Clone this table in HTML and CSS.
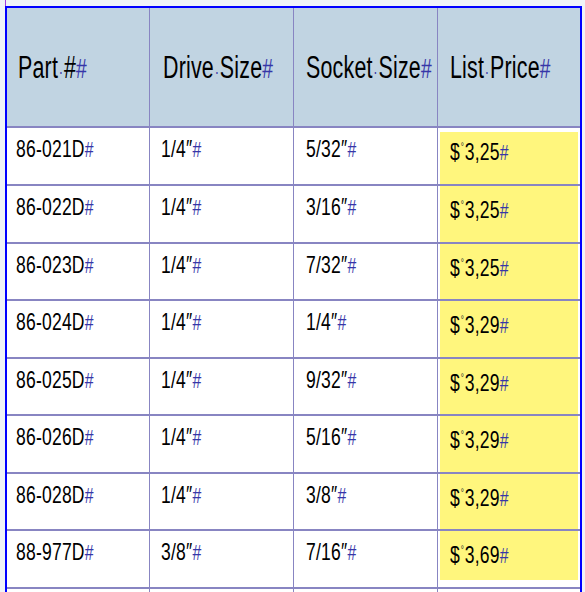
FILE: index.html
```html
<!DOCTYPE html>
<html>
<head>
<meta charset="utf-8">
<link rel="stylesheet" href="styles.css">
</head>
<body>
<div class="stub"></div>
<div class="tbl">
  <div class="th c1"><span class="t">Part<span class="sp">·</span>#<span class="em">#</span></span></div>
  <div class="th c2"><span class="t">Drive<span class="sp">·</span>Size<span class="em">#</span></span></div>
  <div class="th c3"><span class="t">Socket<span class="sp">·</span>Size<span class="em">#</span></span></div>
  <div class="th c4"><span class="t">List<span class="sp">·</span>Price<span class="em">#</span></span></div>

  <div class="td c1"><span class="t">86-021D<span class="em">#</span></span></div>
  <div class="td c2"><span class="t">1/4″<span class="em">#</span></span></div>
  <div class="td c3"><span class="t">5/32″<span class="em">#</span></span></div>
  <div class="td c4 first"><div class="hl"><span class="t">$<span class="nb">°</span>3,25<span class="em">#</span></span></div></div>

  <div class="td c1"><span class="t">86-022D<span class="em">#</span></span></div>
  <div class="td c2"><span class="t">1/4″<span class="em">#</span></span></div>
  <div class="td c3"><span class="t">3/16″<span class="em">#</span></span></div>
  <div class="td c4"><div class="hl"><span class="t">$<span class="nb">°</span>3,25<span class="em">#</span></span></div></div>

  <div class="td c1"><span class="t">86-023D<span class="em">#</span></span></div>
  <div class="td c2"><span class="t">1/4″<span class="em">#</span></span></div>
  <div class="td c3"><span class="t">7/32″<span class="em">#</span></span></div>
  <div class="td c4"><div class="hl"><span class="t">$<span class="nb">°</span>3,25<span class="em">#</span></span></div></div>

  <div class="td c1"><span class="t">86-024D<span class="em">#</span></span></div>
  <div class="td c2"><span class="t">1/4″<span class="em">#</span></span></div>
  <div class="td c3"><span class="t">1/4″<span class="em">#</span></span></div>
  <div class="td c4"><div class="hl"><span class="t">$<span class="nb">°</span>3,29<span class="em">#</span></span></div></div>

  <div class="td c1"><span class="t">86-025D<span class="em">#</span></span></div>
  <div class="td c2"><span class="t">1/4″<span class="em">#</span></span></div>
  <div class="td c3"><span class="t">9/32″<span class="em">#</span></span></div>
  <div class="td c4"><div class="hl"><span class="t">$<span class="nb">°</span>3,29<span class="em">#</span></span></div></div>

  <div class="td c1"><span class="t">86-026D<span class="em">#</span></span></div>
  <div class="td c2"><span class="t">1/4″<span class="em">#</span></span></div>
  <div class="td c3"><span class="t">5/16″<span class="em">#</span></span></div>
  <div class="td c4"><div class="hl"><span class="t">$<span class="nb">°</span>3,29<span class="em">#</span></span></div></div>

  <div class="td c1"><span class="t">86-028D<span class="em">#</span></span></div>
  <div class="td c2"><span class="t">1/4″<span class="em">#</span></span></div>
  <div class="td c3"><span class="t">3/8″<span class="em">#</span></span></div>
  <div class="td c4"><div class="hl"><span class="t">$<span class="nb">°</span>3,29<span class="em">#</span></span></div></div>

  <div class="td c1"><span class="t">88-977D<span class="em">#</span></span></div>
  <div class="td c2"><span class="t">3/8″<span class="em">#</span></span></div>
  <div class="td c3"><span class="t">7/16″<span class="em">#</span></span></div>
  <div class="td c4 last"><div class="hl"><span class="t">$<span class="nb">°</span>3,69<span class="em">#</span></span></div></div>

  <div class="td c1"></div>
  <div class="td c2"></div>
  <div class="td c3"></div>
  <div class="td c4"></div>
</div>
</body>
</html>
```

FILE: styles.css
```css
html, body {
  margin: 0;
  padding: 0;
  background: #f0f4f8;
  overflow: hidden;
}
body {
  width: 585px;
  height: 592px;
  font-family: "Liberation Sans", Arial, sans-serif;
  color: #000;
}
.stub {
  width: 1px;
  height: 6px;
  margin-left: 5px;
  background: #a040e0;
}
.tbl {
  width: 577px;
  height: 586px;
  overflow: hidden;
  box-sizing: border-box;
  margin-left: 5px;
  border-top: 2px solid #0000ff;
  border-left: 2px solid #0000ff;
  border-right: 2px solid #0000ff;
  background: #8885c2;
  display: grid;
  grid-template-columns: 142px 143px 143px 142px;
  grid-template-rows: 118px 56px 56px 55px 56px 55px 56px 55px 56px 40px;
  column-gap: 1px;
  row-gap: 2px;
}
.th, .td {
  overflow: hidden;
  white-space: nowrap;
}
.th {
  background: #c1d4e2;
  font-size: 31px;
  display: flex;
  align-items: center;
  padding-top: 2px;
  box-sizing: border-box;
}
.th .t {
  transform: scaleX(0.69);
}
.td {
  background: #fff;
  font-size: 24px;
  line-height: 28px;
  padding-top: 7px;
  box-sizing: border-box;
}
.t {
  display: inline-block;
  transform: scaleX(0.73);
  transform-origin: 0 50%;
  letter-spacing: 0.3px;
}
.th.c1 { padding-left: 11px; }
.th.c2 { padding-left: 13px; }
.th.c3 { padding-left: 12px; }
.th.c4 { padding-left: 12px; }
.td.c1 { padding-left: 9px; }
.td.c2 { padding-left: 11px; }
.td.c3 { padding-left: 12px; }
.td.c4 {
  padding: 0 2px 0 2px;
}
.td.c4.first { padding-top: 4px; }
.td.c4.last { padding-bottom: 7px; }
.hl {
  background: #fff67d;
  height: 100%;
  padding-top: 10px;
  padding-left: 10px;
  box-sizing: border-box;
}
.td.c4.first .hl { padding-top: 6px; }
.sp {
  color: #3a3aa6;
  font-size: 0.6em;
  margin: 0 1px;
}
.em {
  color: #3636a8;
  font-size: 0.9em;
}
.nb {
  font-size: 0.45em;
  line-height: 0;
  vertical-align: 0.9em;
  color: #333;
  margin: 0 1px;
}
```
